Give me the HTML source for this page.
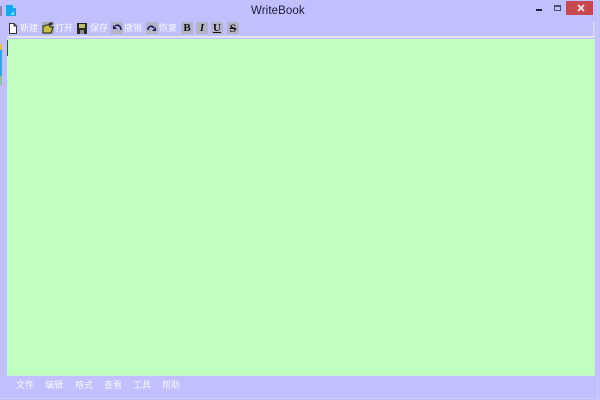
<!DOCTYPE html>
<html><head><meta charset="utf-8"><style>
*{margin:0;padding:0;box-sizing:border-box}
html,body{width:600px;height:400px;overflow:hidden;background:#c0c0ff}
body{position:relative;font-family:"Liberation Sans","Noto Sans CJK SC",sans-serif}
div,svg,span{position:absolute}
svg{filter:blur(.35px)}
.t{font-size:9px;line-height:12px;color:#f6f6ff;white-space:nowrap;top:22px;filter:blur(.25px)}
.m{font-size:9px;line-height:12px;color:#f6f6ff;white-space:nowrap;top:379px;filter:blur(.25px)}
.b{width:12px;height:12px;background:#b4b4c8;top:22px;filter:blur(.3px)}
.f{font:bold 11px/12px "Liberation Serif",serif;color:#111;text-align:center;width:12px;left:0;top:0}
</style></head><body>
<div style="left:7px;top:39px;width:588px;height:337px;background:#c0ffc0;border-right:1px solid #c8f0d0;border-bottom:1px solid #c8f0d0"></div>
<div style="left:7px;top:36px;width:588px;height:2px;background:#e2e2fa"></div>
<div style="left:593px;top:22px;width:2px;height:14px;background:#d4d4ee"></div>
<div style="left:597px;top:0;width:1px;height:400px;background:#cbcbfa"></div>
<div style="left:0;top:398px;width:600px;height:1px;background:#cbcbfa"></div>
<div style="left:7px;top:40px;width:1px;height:16px;background:#444"></div>
<div style="left:0;top:6px;width:2px;height:10px;background:#7f8fb0"></div>
<div style="left:0;top:44px;width:2px;height:6px;background:#e0c040"></div>
<div style="left:0;top:50px;width:2px;height:26px;background:#28a8f0"></div>
<div style="left:0;top:76px;width:2px;height:9px;background:#90c0a0"></div>
<svg style="left:5px;top:4px" width="12" height="13" viewBox="0 0 12 13"><path d="M1 1H8L11 4V12H1Z" fill="#12a8f4"/><path d="M5 11L9 7V11Z" fill="#7ee0f0"/><path d="M8 1L11 4H8Z" fill="#9edcf8"/></svg>
<div style="left:251px;top:4px;font-size:11.5px;line-height:14px;color:#1a1a3a;letter-spacing:.1px">WriteBook</div>
<div style="left:536px;top:9px;width:6px;height:1.5px;background:#222240"></div>
<div style="left:554px;top:5px;width:7px;height:6px;border:1.5px solid #50506c;border-top-width:2px"></div>
<div style="left:566px;top:1px;width:27px;height:14px;background:#c8484e"></div>
<svg style="left:577px;top:4px" width="8" height="8" viewBox="0 0 8 8"><path d="M1 1L7 7M7 1L1 7" stroke="#f4e8ea" stroke-width="1.8"/></svg>
<svg style="left:9px;top:23px" width="8" height="11" viewBox="0 0 8 11"><path d="M.5.5H5L7.5 3V10.5H.5Z" fill="#fff" stroke="#333"/><path d="M5 .5V3H7.5" fill="none" stroke="#333"/></svg>
<span class="t" style="left:20px">新建</span>
<svg style="left:42px;top:22px" width="12" height="12" viewBox="0 0 12 12"><rect width="12" height="12" fill="#aaa9b8"/><path d="M1 11V4H3L4 3H8V5H11L9 11Z" fill="#c8c040" stroke="#222" stroke-width="1"/><path d="M6 2L9 0 11 1 10 3 8 3Z" fill="#333"/></svg>
<span class="t" style="left:55px">打开</span>
<svg style="left:77px;top:23px" width="10" height="11" viewBox="0 0 10 11"><rect width="10" height="11" fill="#2a2a20"/><rect x="2" y="1" width="6" height="4" fill="#b8b870"/><rect x="3" y="7" width="4" height="4" fill="#8a8a8a"/></svg>
<span class="t" style="left:90px">保存</span>
<div class="b" style="left:111px"></div>
<svg style="left:111px;top:22px" width="12" height="12" viewBox="0 0 12 12"><path d="M2 7V3L6 7Z" fill="#1a1a60"/><path d="M4 4C7 2 10 4 10 8" fill="none" stroke="#1a1a60" stroke-width="1.6"/></svg>
<span class="t" style="left:124px">撤销</span>
<div class="b" style="left:146px"></div>
<svg style="left:146px;top:22px" width="12" height="12" viewBox="0 0 12 12"><path d="M10 9V5L6 9Z" fill="#1a1a60"/><path d="M8 6C6 3 2 4 2 8" fill="none" stroke="#1a1a60" stroke-width="1.6"/></svg>
<span class="t" style="left:159px">恢复</span>
<div class="b" style="left:181px"><span class="f">B</span></div>
<div class="b" style="left:196px"><span class="f" style="font-style:italic">I</span></div>
<div class="b" style="left:211px"><span class="f" style="text-decoration:underline">U</span></div>
<div class="b" style="left:227px"><span class="f" style="text-decoration:line-through;font-size:12px">S</span></div>
<span class="m" style="left:16px">文件</span>
<span class="m" style="left:45px">编辑</span>
<span class="m" style="left:75px">格式</span>
<span class="m" style="left:104px">查看</span>
<span class="m" style="left:133px">工具</span>
<span class="m" style="left:162px">帮助</span>
</body></html>
